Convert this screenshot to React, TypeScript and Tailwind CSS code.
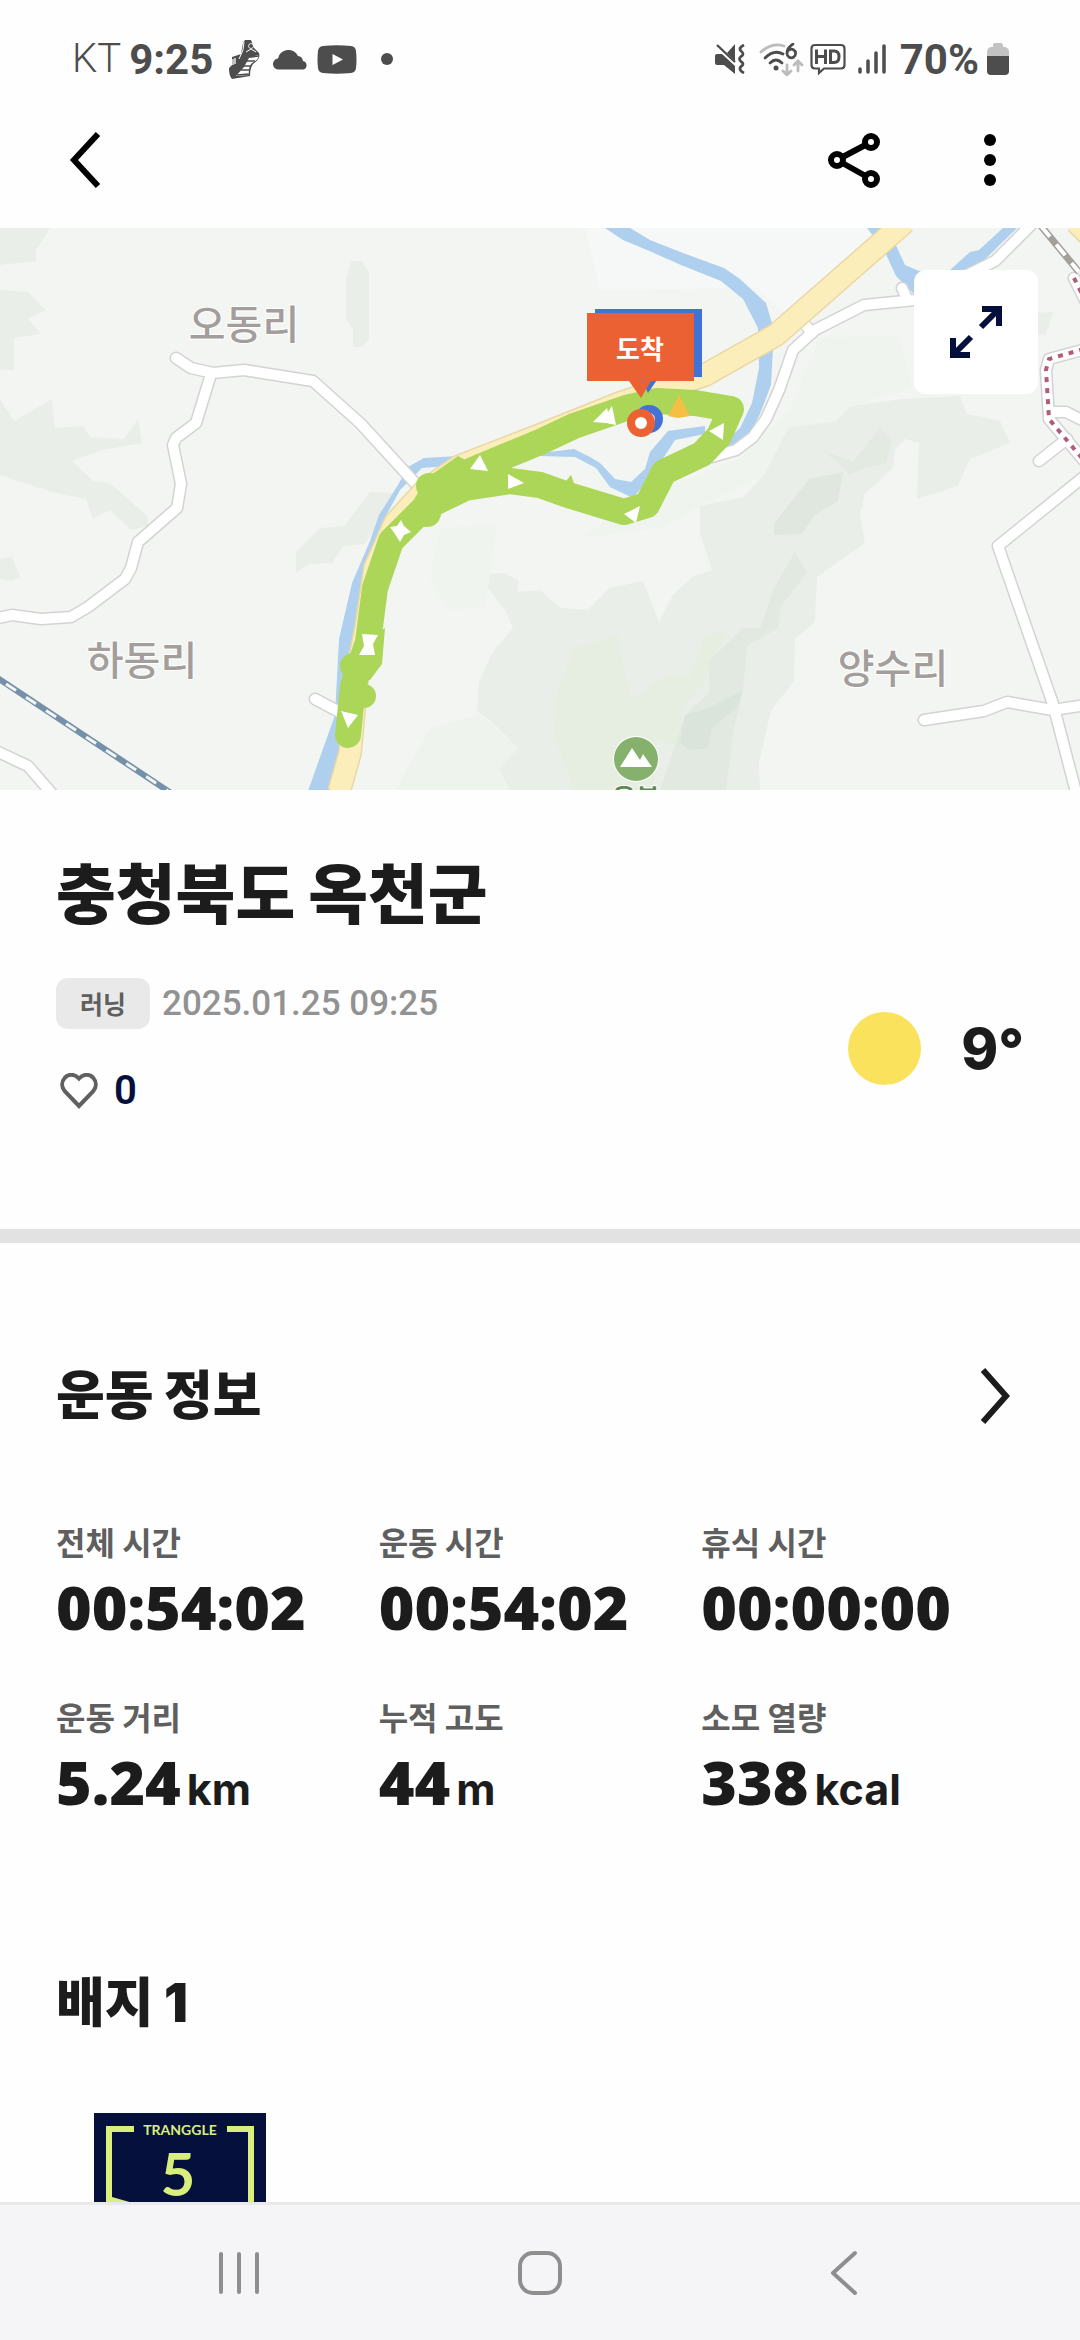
import type { ReactNode } from 'react';

type Stat = {
  label: string;
  value: string;
  unit?: string;
};

const stats: Stat[] = [
  { label: '전체 시간', value: '00:54:02' },
  { label: '운동 시간', value: '00:54:02' },
  { label: '휴식 시간', value: '00:00:00' },
  { label: '운동 거리', value: '5.24', unit: 'km' },
  { label: '누적 고도', value: '44', unit: 'm' },
  { label: '소모 열량', value: '338', unit: 'kcal' },
];

const roads = [
  'M176 130L191 140L213 145L244 142L313 153L360 195L415 255',
  'M211 146L196 195L176 210L173 217L181 256L177 280L138 314L131 340L125 351L88 379L71 389L41 391L12 387L-6 391',
  'M-6 522L28 538L54 568',
  'M315 471L345 487',
  'M712 229L736 222L753 209L766 191L779 162L793 122L815 102L864 77L925 71',
  'M803 94L812 105',
  'M902 60L907 71',
  'M1034 -6L995 33L953 54',
  'M1086 247L998 318L1053 476L1077 568',
  'M924 492L984 483L1007 474L1053 482L1086 477',
  'M1039 233L1067 211',
  'M1052 184L1066 184L1086 194',
  'M1086 121L1049 131L1046 142L1049 191L1086 235',
  'M1074 50L1086 74',
];

const forests = [
  'M0 0H50L36 22V33L0 37Z',
  'M0 62L28 64L46 82L28 91L41 106L14 110V142H0Z',
  'M0 171L14 193L52 171L55 200L83 198L90 209L124 211L138 191L142 215L103 222L72 233L93 253L110 255L148 289V298L131 302L110 282L93 291L86 271L52 264L0 247Z',
  'M0 331L12 329L20 349L12 353L0 351Z',
  'M351 33H362L369 44V111L362 119H353V102L346 91V51Z',
  'M296 324L320 300L344 298L370 264L393 265L379 295L365 316L344 318L332 335L310 336L296 344Z',
  'M488 346L505 345L519 353L517 364L540 362L561 380L588 382L609 360L643 353L659 394L673 367L692 349L712 342L700 306V278L743 269L764 247L788 200L812 193L836 193L850 178L902 171L960 168L967 186L1000 193L1010 215L970 231L958 258L917 271L919 215L905 211L895 222L893 240L865 266L860 287L865 315L817 349L815 394L795 411L794 453L771 483L759 534L760 563H510L499 541L518 520L492 494L477 483L479 454L492 425L513 400L505 382L488 360Z',
  'M1020 86L1053 84L1046 107L1030 106Z',
];

const highway =
  'M339 564L350 525L358 440L366 400L375 340L395 295L425 262L460 238L540 207L620 175L705 147L776 107L905 -6M1076 -6L1088 6';

const routeArrows =
  'M480 227L470 241L488 243ZM508 246L524 255L508 261ZM390 299L397 298L401 292L404 298L411 304L404 307L400 314L395 306ZM362 406L378 407L373 416L375 427H359L364 418ZM341 483L358 487L348 500ZM593 194L607 180L608 184L612 178L616 197L606 195ZM709 203L724 195L723 212ZM624 286L640 278L636 295Z';

function RouteMap() {
  return (
    <svg viewBox="0 0 1080 562" preserveAspectRatio="xMidYMid slice" className="block w-full" role="img" aria-label="운동 경로 지도">
      <rect width="1080" height="562" fill="#f3f5f2" />
      <path d="M585 0H900L790 90L755 60L600 62Z" fill="#f6f7f7" />
      {forests.map((d) => (
        <path key={d} d={d} fill="#e9efe8" />
      ))}
      <path d="M820 110L900 108L912 160L850 178L836 193L788 200L764 247L700 278L660 300L580 310L640 270L740 230L790 180Z" fill="#eff4ee" />
      <path d="M440 300L497 296L485 380L445 382L430 350Z" fill="#eff4ee" />
      <path d="M430 500L480 486L518 520L499 541L510 563H395Z" fill="#eef3ed" />
      <path d="M574 420L617 407L631 472L667 447L691 447L705 407L726 402L705 454L681 480L685 520L657 512L654 563H574L554 505L557 465Z" fill="#e5eee1" />
      <path d="M795 324L807 345L781 378L778 400L747 418L743 462L733 505L726 563H660L685 487L709 465V433L743 400H760L774 360Z" fill="#e1e9e1" />
      <path d="M809 251L843 244L838 273L815 287L802 306L774 307V296Z" fill="#dfe7df" />
      <path d="M824 223L853 234L880 200L892 212L886 236L865 240L850 246Z" fill="#e3eae2" />
      <path d="M685 487L709 480L743 462L738 478L712 500L708 520L690 522L680 515Z" fill="#dbe4db" />

      {/* rivers */}
      <g fill="#aed0ee">
        <path d="M458 228L424 230L408 239L398 257L379 287L370 313L352 355L339 411L335 487L308 563H331L345 520L358 407L367 335L382 295L400 262L422 240L448 238Z" />
        <path d="M540 225L574 221L590 229L600 235L615 251L631 254L645 241L650 224L668 203L705 198V206L675 212L660 235L650 250L633 270L610 259L596 240L575 229L540 228Z" />
        <path d="M605 0L623 12L647 22L681 37L721 53L743 71L758 100L759 140L752 175L740 200L720 219H732L747 211L760 186L771 157L774 102L766 75L740 51L724 40L683 25L650 12L630 0Z" />
        <path d="M867 0L884 22L896 48L914 66H950L972 44L1017 0H1003L979 22L970 24L950 42L919 43L905 37L888 0Z" />
      </g>

      {/* local roads: casing first, then the white fill */}
      <g fill="none" strokeLinejoin="round" strokeLinecap="round">
        <g stroke="#d3d3d3" strokeWidth="13">
          {roads.map((d) => (
            <path key={d} d={d} />
          ))}
        </g>
        <g stroke="#ffffff" strokeWidth="10">
          {roads.map((d) => (
            <path key={d} d={d} />
          ))}
        </g>
      </g>

      {/* highway */}
      <g fill="none" strokeLinejoin="round">
        <path d={highway} stroke="#e9d8a5" strokeWidth="24" />
        <path d={highway} stroke="#fbeebb" strokeWidth="21" />
      </g>

      {/* railways and walking trail */}
      <g fill="none">
        <path d="M-4 449L174 567" stroke="#7590a9" strokeWidth="6" />
        <path d="M6 456L174 567" stroke="#f3f5f2" strokeWidth="3" strokeDasharray="12 12" />
        <path d="M1041 -2L1079 44" stroke="#a3a09c" strokeWidth="7" />
        <path d="M1041 -2L1079 44" stroke="#ffffff" strokeWidth="4" strokeDasharray="14 10" />
        <path d="M1084 121L1049 131L1046 142L1049 191L1086 235M1074 50L1086 74" stroke="#b25b7c" strokeWidth="4" strokeDasharray="5 6" />
      </g>

      {/* tracked route */}
      <path
        d="M348 507L353 458L368 414L375 360L391 313L424 280L437 258L482 238L540 214L574 198L626 180L657 173L695 175L731 181L719 208L702 226L664 244L647 277L624 284L568 267L540 257L510 253L465 260L430 277"
        fill="none"
        stroke="#abd657"
        strokeWidth="26"
        strokeLinejoin="round"
        strokeLinecap="round"
      />
      <g fill="#abd657">
        <circle cx="353" cy="438" r="13" />
        <circle cx="364" cy="468" r="12" />
        <circle cx="427" cy="285" r="14" />
        <circle cx="429" cy="258" r="13" />
        <path d="M424 252L458 228L480 240L470 265L430 280Z" />
        <path d="M346 430L385 400L382 436L370 452L342 456Z" />
        <path d="M566 253L571 247L575 258Z" />
      </g>
      <path d={routeArrows} fill="#ffffff" />
      <path d="M679 167L668 188L678 190L690 188Z" fill="#f5bf43" />

      {/* start and finish markers */}
      <rect x="595" y="81" width="107" height="68" fill="#4272d6" />
      <path d="M640 149H659L648 165Z" fill="#4272d6" />
      <circle cx="649" cy="191" r="10" fill="#ffffff" stroke="#4272d6" strokeWidth="8" />
      <rect x="587" y="85" width="107" height="68" fill="#eb6134" />
      <path d="M629 153H651L641 170Z" fill="#eb6134" />
      <circle cx="641" cy="195" r="10" fill="#ffffff" stroke="#eb6134" strokeWidth="8" />
      <text x="640" y="131" textAnchor="middle" fill="#ffffff" className="text-[26px] font-bold">
        도착
      </text>

      {/* peak */}
      <circle cx="636" cy="531" r="23" fill="#ffffff" />
      <circle cx="636" cy="531" r="22" fill="#86b16d" />
      <path d="M620 539L632 520L640 532L643 526L652 539Z" fill="#ffffff" />

      <g className="text-[40px] font-medium" textAnchor="middle" fill="#a39d9b" stroke="#ffffff" strokeWidth="2" paintOrder="stroke">
        <text x="244" y="111">오동리</text>
        <text x="142" y="447">하동리</text>
        <text x="893" y="455">양수리</text>
        <text x="636" y="580" fill="#5f8a52" className="text-[26px] font-bold">
          용봉
        </text>
      </g>
    </svg>
  );
}

function StatusBar() {
  return (
    <div className="flex h-[80px] items-end justify-between pr-[71px] pl-[72px] font-['Roboto',sans-serif] text-[42px] text-[#4d4d4d]">
      <div className="flex h-[42px] items-center">
        <span className="text-[40px] font-light">KT</span>
        <span className="ml-2 font-bold">9:25</span>
        <svg width="32" height="40" viewBox="0 0 32 40" className="ml-4" fill="currentColor" aria-hidden="true">
          <path d="M14 4L16 1L22 1L25 9L30 14Q32 20 24 25Q21 29 21 37L3 40Q0 37 0 29L3 26L3 18L12 15Z" />
          <path d="M29 16Q31 20 23 24Q19 28 20 36L7 37L15 28L20 19Z" fill="#ffffff" />
          <path d="M8 36L20 35M12 31L20 31M15 27L22 27M18 22L26 22M21 18L30 17" fill="none" stroke="currentColor" strokeWidth="1.600" />
          <path d="M4 26V20M6 25V19" fill="none" stroke="#ffffff" strokeWidth="1.300" />
          <path d="M15 3L14 11L10 20M17 13L22 10L27 13" fill="none" stroke="#ffffff" strokeWidth="1" />
          <circle cx="22" cy="7" r="2.500" fill="none" stroke="#ffffff" strokeWidth="0.800" />
        </svg>
        <svg width="36" height="21" viewBox="0 0 36 21" className="ml-3" fill="currentColor" aria-hidden="true">
          <path d="M6 20.500A5.500 5.500 0 0 1 5 9.500A10.500 10 0 0 1 25 7A6 6 0 0 1 30 12A4.500 4.500 0 0 1 31 20.500Z" />
        </svg>
        <svg width="40" height="29" viewBox="0 0 40 29" className="ml-2" fill="currentColor" aria-hidden="true">
          <path d="M6 1Q20-.5 34 1Q38.500 1.500 39 6Q40 14.500 39 23Q38.500 27.500 34 28Q20 29.500 6 28Q1.500 27.500 1 23Q0 14.500 1 6Q1.500 1.500 6 1Z" />
          <path d="M15.500 9V20L26 14.500Z" fill="#ffffff" />
        </svg>
        <span className="ml-6 size-3 rounded-full bg-[#4d4d4d]" />
      </div>
      <div className="flex h-[42px] items-center">
        <svg width="30" height="30" viewBox="0 0 30 30" fill="currentColor" aria-hidden="true">
          <path d="M0 12Q0 10 2 10H7L20 22V30L9 21H2Q0 21 0 19ZM20 0V17L12 9Z" />
          <path d="M2 1L20 18" stroke="currentColor" strokeWidth="2.400" />
          <path d="M29 1Q23 4 26 7Q30 10 26 12.500Q23 15 26 17.500Q30 20 26 22.500Q23 26 29 29" fill="none" stroke="currentColor" strokeWidth="2.800" />
        </svg>
        <svg width="45" height="33" viewBox="0 0 45 33" className="ml-[14px]" fill="none" stroke="currentColor" strokeWidth="2.800" strokeLinecap="round" aria-hidden="true">
          <path d="M2 9Q13-1 25 3" stroke="#bcbcbc" />
          <path d="M6 15Q15 6 24 11M11 20Q17 14 23 20" />
          <circle cx="17" cy="25" r="2.500" fill="currentColor" stroke="none" />
          <path d="M34 1Q28 5 28 10M28 10.500A4.300 4.300 0 1 0 28 10.400" />
          <path d="M28 22V31M24 28L28 32L32 28M39 28V19M35 22L39 18L43 22" stroke="#bcbcbc" />
        </svg>
        <svg width="36" height="32" viewBox="0 0 36 32" className="ml-[6px]" fill="none" stroke="currentColor" strokeWidth="2.200" aria-hidden="true">
          <path d="M5 2H31Q34.500 2 34.500 5.500V22Q34.500 25.500 31 25.500H14L9 30V25.500H5Q1.500 25.500 1.500 22V5.500Q1.500 2 5 2Z" />
          <path d="M6.500 6.500V21M15.500 6.500V21M6.500 13.500H15.500M20.500 8V19.500H24Q29 19.500 29 13.700Q29 8 24 8Z" strokeWidth="3" />
        </svg>
        <svg width="28" height="30" viewBox="0 0 28 30" className="ml-3" stroke="currentColor" strokeWidth="3.500" strokeLinecap="round" aria-hidden="true">
          <path d="M2 25V28M10 17V28M18 9V28M26 2V28" />
        </svg>
        <span className="ml-[14px] font-bold">70%</span>
        <svg width="22" height="32" viewBox="0 0 22 32" className="ml-2" aria-hidden="true">
          <path d="M6 2Q6 0 8 0H14Q16 0 16 2V4H18Q22 5 22 9V14H0V9Q0 5 4 4H6Z" fill="#c2c2c2" />
          <path d="M0 13H22V28Q22 32 18 32H4Q0 32 0 28Z" fill="currentColor" />
        </svg>
      </div>
    </div>
  );
}

function SectionTitle({ children }: { children: ReactNode }) {
  return <h2 className="font-['Inter','Noto_Sans_CJK_KR',sans-serif] text-[53px] leading-[80px] font-black">{children}</h2>;
}

export default function App() {
  return (
    <div className="flex h-screen flex-col bg-[#fefefe] font-['Noto_Sans_CJK_KR',sans-serif] text-[#1c1c1c]">
      <StatusBar />
      <header className="flex h-[148px] shrink-0 items-center justify-between px-14 pt-3 text-black">
        <button type="button" aria-label="뒤로" className="p-3">
          <svg width="34" height="56" viewBox="0 0 34 56" fill="none" stroke="currentColor" strokeWidth="6">
            <path d="M30 2L6 28L30 54" />
          </svg>
        </button>
        <div className="flex items-center gap-16">
          <button type="button" aria-label="공유" className="p-3">
            <svg width="52" height="56" viewBox="0 0 52 56" fill="none" stroke="currentColor" strokeWidth="6">
              <path d="M9 28L43 10M9 28L43 47" />
              <g fill="#ffffff">
                <circle cx="9" cy="28" r="6" />
                <circle cx="43" cy="10" r="6" />
                <circle cx="43" cy="47" r="6" />
              </g>
            </svg>
          </button>
          <button type="button" aria-label="더보기" className="p-3">
            <svg width="44" height="56" viewBox="0 0 44 56" fill="currentColor">
              <circle cx="22" cy="8" r="6" />
              <circle cx="22" cy="28" r="6" />
              <circle cx="22" cy="48" r="6" />
            </svg>
          </button>
        </div>
      </header>

      <main className="min-h-0 flex-1 overflow-hidden">
        <div className="relative">
          <RouteMap />
          <button type="button" aria-label="지도 확대" className="absolute top-[42px] right-[42px] flex size-[124px] items-center justify-center rounded-xl bg-white text-[#050f3c]">
            <svg width="52" height="52" viewBox="0 0 52 52" fill="none" stroke="currentColor" strokeWidth="6">
              <path d="M32 3H49V20M49 3L31 21M20 49H3V32M3 49L21 31" />
            </svg>
          </button>
        </div>

        <section className="px-14 pt-14 pb-[112px]">
          <h1 className="font-['Inter','Noto_Sans_CJK_KR',sans-serif] text-[65px] leading-[98px] font-black">충청북도 옥천군</h1>
          <div className="flex items-center justify-between">
            <div>
              <div className="mt-[34px] flex items-center gap-3">
                <span className="rounded-xl bg-[#e9e9e9] px-6 text-[25px] leading-[51px] font-bold text-[#5f5f5f]">러닝</span>
                <time className="font-['Roboto',sans-serif] text-[35px] leading-[51px] font-medium text-[#929292]">2025.01.25 09:25</time>
              </div>
              <button type="button" aria-label="좋아요 0" className="mt-9 flex items-center gap-4 pl-1 font-['Roboto',sans-serif] text-[40px] leading-[52px] font-semibold text-[#050f3c]">
                <svg width="38" height="36" viewBox="0 0 38 36" fill="none" stroke="#606060" strokeWidth="4">
                  <path d="M19 5.500C14 0 8 1.500 5 4.500C1 9 1.500 14.500 5 18.500L19 33L33 18.500C36.500 14.500 37 9 33 4.500C30 1.500 24 0 19 5.500Z" />
                </svg>
                0
              </button>
            </div>
            <div className="flex items-center gap-10 pt-9">
              <span className="size-[73px] rounded-full bg-[#fae25c]" />
              <span className="font-['Inter',sans-serif] text-[56px] leading-[72px] font-extrabold">9°</span>
            </div>
          </div>
        </section>

        <hr className="h-[14px] border-0 bg-[#e2e2e2]" />

        <section className="px-14 pt-[113px]">
          <div className="flex items-center justify-between">
            <SectionTitle>운동 정보</SectionTitle>
            <button type="button" aria-label="운동 정보 자세히" className="px-2">
              <svg width="36" height="56" viewBox="0 0 36 56" fill="none" stroke="currentColor" strokeWidth="6">
                <path d="M3 2L26 28L3 54" />
              </svg>
            </button>
          </div>
          <dl className="mt-[81px] grid grid-cols-3 gap-y-[49px]">
            {stats.map(({ label, value, unit }) => (
              <div key={label}>
                <dt className="text-[32px] leading-[48px] font-bold text-[#5f5f5f]">{label}</dt>
                <dd className="mt-[6px] font-['Open_Sans',sans-serif] text-[61px] leading-[72px] font-extrabold">
                  {value}
                  {unit && <span className="ml-[6px] font-['Inter',sans-serif] text-[43px] font-bold">{unit}</span>}
                </dd>
              </div>
            ))}
          </dl>
        </section>

        <section className="px-14 pt-[138px]">
          <SectionTitle>배지 1</SectionTitle>
          <svg width="172" height="200" viewBox="0 0 172 200" className="mt-[70px] ml-[38px]" role="img" aria-label="TRANGGLE 5 배지">
            <rect width="172" height="200" fill="#06103d" />
            <path d="M40 16H15V200M133 16H157V200" fill="none" stroke="#d9ef7d" strokeWidth="6" />
            <path d="M18 84L172 128V136L12 120Z" fill="#d9ef7d" />
            <g fill="#d9ef7d" textAnchor="middle" className="font-['Lato',sans-serif] font-bold">
              <text x="86" y="22" className="text-[14px]">TRANGGLE</text>
              <text x="84" y="83" className="text-[60px]">5</text>
            </g>
          </svg>
        </section>
      </main>

      <nav className="grid h-[138px] shrink-0 grid-cols-3 border-t-[3px] border-[#e9e9e9] bg-[#f5f5f7] px-[88px] text-[#8e8e8e]">
        <button type="button" aria-label="최근 앱" className="flex items-center justify-center">
          <svg width="40" height="44" viewBox="0 0 40 44" stroke="currentColor" strokeWidth="4" strokeLinecap="round">
            <path d="M2 3V41M20 3V41M38 3V41" />
          </svg>
        </button>
        <button type="button" aria-label="홈" className="flex items-center justify-center">
          <svg width="44" height="44" viewBox="0 0 44 44" fill="none" stroke="currentColor" strokeWidth="4">
            <rect x="2" y="2" width="40" height="40" rx="13" />
          </svg>
        </button>
        <button type="button" aria-label="이전" className="flex items-center justify-center">
          <svg width="32" height="46" viewBox="0 0 32 46" fill="none" stroke="currentColor" strokeWidth="4" strokeLinecap="round" strokeLinejoin="round">
            <path d="M30 3L8 23L30 43" />
          </svg>
        </button>
      </nav>
    </div>
  );
}
